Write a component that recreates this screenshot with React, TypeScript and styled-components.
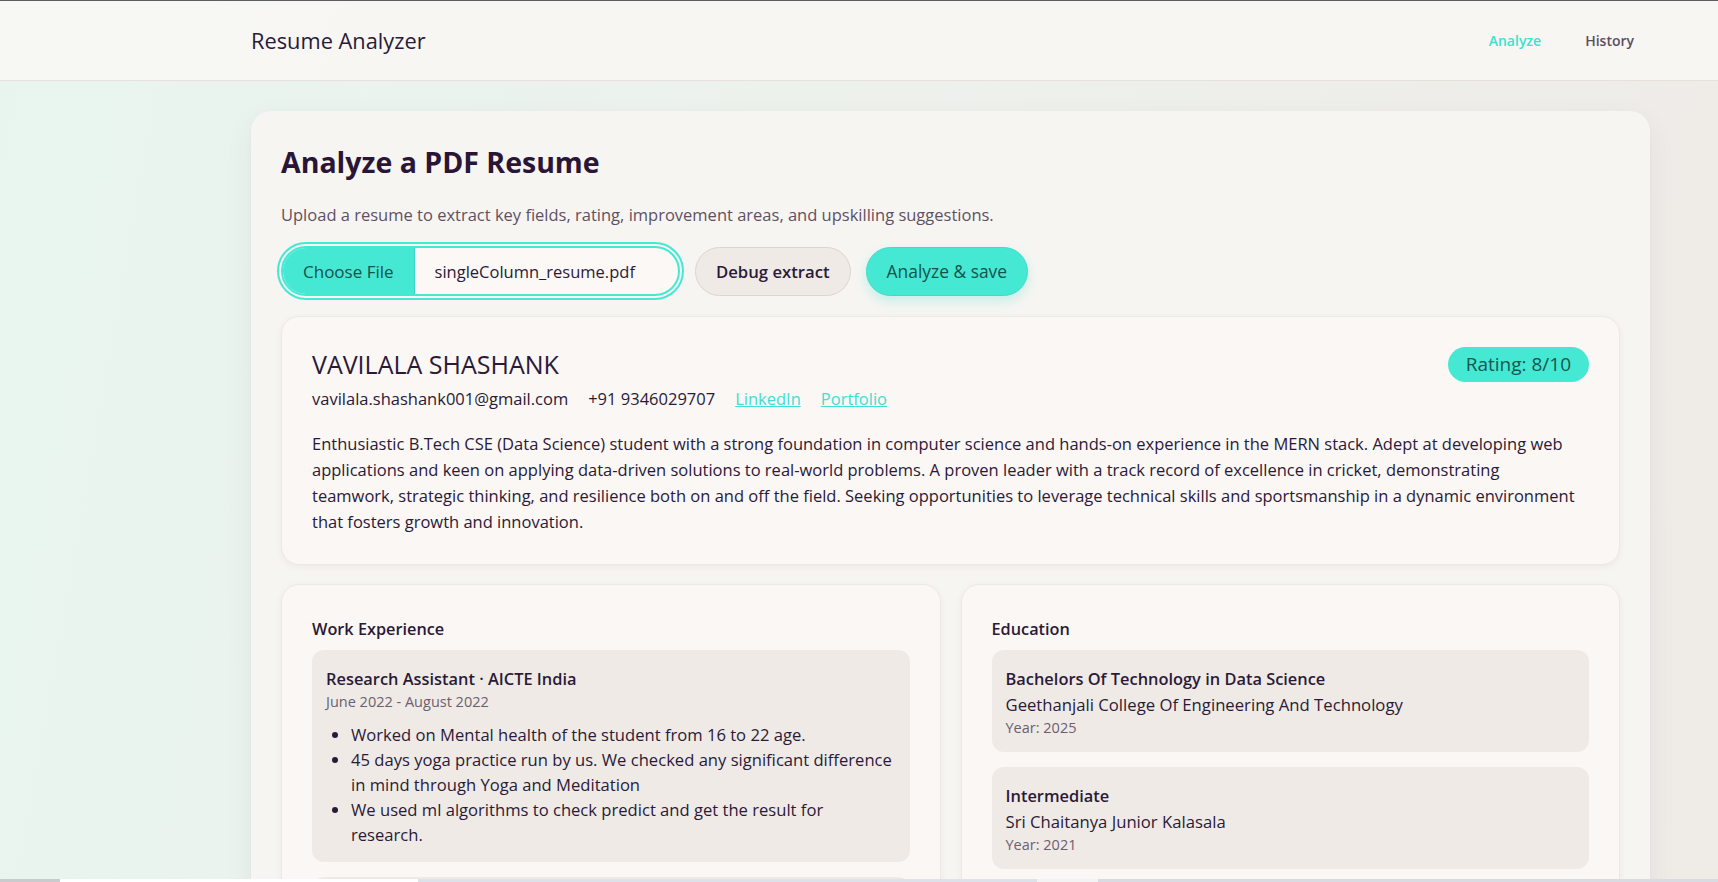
import React from 'react';
import styled, { createGlobalStyle } from 'styled-components';

// Page-wide reset and background
const GlobalStyle = createGlobalStyle`
  html, body {
    margin: 0;
    padding: 0;
  }
  body {
    min-height: 100vh;
    font-family: "Open Sans", "Noto Sans", "Liberation Sans", sans-serif;
    color: #2a1a38;
    background: linear-gradient(100deg, #e8f5ef 0%, #edf1ec 45%, #efebe7 100%);
    overflow: hidden;
  }
  * { box-sizing: border-box; }
`;

const TEAL = '#45e9d3';
const INK = '#2a1a38';

const TopBar = styled.header`
  height: 81px;
  border-top: 1px solid #5c5c5c;
  border-bottom: 1px solid #e8e0dd;
  background: rgba(247, 246, 243, 0.92);
  display: flex;
  align-items: center;
`;

const Shell = styled.div`
  width: 1399px;
  margin-left: 251px;
`;

const TopBarInner = styled(Shell)`
  display: flex;
  align-items: center;
  justify-content: space-between;
`;

const Brand = styled.div`
  font-size: 21.8px;
  font-weight: 500;
  color: ${INK};
`;

const Nav = styled.nav`
  display: flex;
  gap: 12px;
`;

const NavLink = styled.a<{ $active?: boolean }>`
  padding: 8px 16px;
  font-size: 14px;
  font-weight: 600;
  text-decoration: none;
  color: ${(p) => (p.$active ? '#40e0d0' : '#5b4d63')};
`;

const Main = styled.main`
  padding-top: 30px;
`;

const Panel = styled.section`
  background: #f7f5f2;
  border-radius: 20px;
  padding: 34px 30px 40px;
  box-shadow: 0 10px 30px rgba(60, 40, 50, 0.06), 0 1px 3px rgba(60, 40, 50, 0.04);
`;

const Title = styled.h1`
  margin: 0;
  font-size: 28.5px;
  line-height: 35px;
  font-weight: 700;
  color: #2a1536;
`;

const Lead = styled.p`
  margin: 23px 0 0;
  font-size: 16.5px;
  line-height: 24px;
  color: #5e5163;
`;

const Actions = styled.div`
  margin-top: 19px;
  display: flex;
  align-items: center;
  gap: 15px;
`;

const FilePicker = styled.label`
  display: flex;
  align-items: stretch;
  width: 399px;
  height: 50px;
  border: 2px solid ${TEAL};
  border-radius: 999px;
  overflow: hidden;
  background: #fbf8f5;
  outline: 2px solid ${TEAL};
  outline-offset: 2px;
`;

const ChooseButton = styled.span`
  display: flex;
  align-items: center;
  padding: 0 20px;
  background: ${TEAL};
  border-right: 1px solid #3fd6c1;
  font-size: 17px;
  font-weight: 500;
  color: #15524b;
`;

const FileName = styled.span`
  display: flex;
  align-items: center;
  padding-left: 20px;
  font-size: 16.5px;
  color: ${INK};
`;

const Pill = styled.button<{ $primary?: boolean }>`
  height: 49px;
  padding: 0 20px;
  border-radius: 999px;
  font-family: inherit;
  cursor: pointer;
  font-size: ${(p) => (p.$primary ? '17.4px' : '16.7px')};
  font-weight: ${(p) => (p.$primary ? 500 : 600)};
  color: ${(p) => (p.$primary ? '#15524b' : INK)};
  background: ${(p) => (p.$primary ? TEAL : '#efeae6')};
  border: 1px solid ${(p) => (p.$primary ? '#3fdcc6' : '#dcd5cf')};
  box-shadow: ${(p) => (p.$primary ? '0 5px 12px rgba(64, 224, 208, 0.28)' : 'none')};
`;

const Card = styled.div`
  background: #faf7f4;
  border: 1px solid #efe9e4;
  border-radius: 18px;
  padding: 30px 30px 29px;
  box-shadow: 0 2px 6px rgba(60, 40, 50, 0.06);
`;

const ResultCard = styled(Card)`
  margin-top: 20px;
  padding-top: 29px;
`;

const ResultHead = styled.div`
  display: flex;
  align-items: center;
  justify-content: space-between;
`;

const Name = styled.h2`
  margin: 0;
  font-size: 25px;
  line-height: 36px;
  font-weight: 500;
  color: ${INK};
`;

const Rating = styled.span`
  display: inline-flex;
  align-items: center;
  height: 35px;
  padding: 0 18px;
  border-radius: 999px;
  background: ${TEAL};
  color: #17574f;
  font-size: 19px;
`;

const Contacts = styled.div`
  margin-top: 5px;
  display: flex;
  gap: 20px;
  font-size: 16.5px;
  line-height: 24px;
`;

const ContactLink = styled.a`
  color: #40e0d0;
  text-decoration: underline;
`;

const Summary = styled.p`
  margin: 20px 0 0;
  max-width: 1267px;
  font-size: 16.5px;
  line-height: 25.9px;
  color: ${INK};
`;

const Columns = styled.div`
  margin-top: 19px;
  display: grid;
  grid-template-columns: 1fr 1fr;
  gap: 20px;
`;

const SectionTitle = styled.h3`
  margin: 0 0 7px;
  font-size: 16.3px;
  line-height: 28px;
  font-weight: 600;
  color: ${INK};
`;

const ItemList = styled.div`
  display: flex;
  flex-direction: column;
  gap: 15px;
`;

const Item = styled.div`
  background: #efeae6;
  border-radius: 12px;
  padding: 17px 14px 14px;
`;

const ItemTitle = styled.div`
  font-size: 16.4px;
  line-height: 24px;
  font-weight: 600;
  color: ${INK};
`;

const ItemSub = styled.div`
  margin-top: 2px;
  font-size: 16.7px;
  line-height: 24px;
  color: ${INK};
`;

const Meta = styled.div`
  font-size: 14.5px;
  line-height: 21px;
  color: #6b6070;
`;

const Bullets = styled.ul`
  margin: 10px 0 0;
  padding: 0 2px 0 25px;
  font-size: 16.6px;
  line-height: 25.2px;
  color: ${INK};
`;

const BottomEdge = styled.div`
  position: fixed;
  left: 0;
  right: 0;
  bottom: 0;
  height: 3px;
  background: linear-gradient(
    90deg,
    #c9cbcc 0 60px,
    #ffffff 60px 418px,
    #dde2ea 418px 1037px,
    #f3f3f3 1037px 1098px,
    #d8dce2 1098px 100%
  );
`;

const work = [
  {
    role: 'Research Assistant · AICTE India',
    dates: 'June 2022 - August 2022',
    points: [
      'Worked on Mental health of the student from 16 to 22 age.',
      '45 days yoga practice run by us. We checked any significant difference in mind through Yoga and Meditation',
      'We used ml algorithms to check predict and get the result for research.',
    ],
  },
  {
    role: 'Web Developer Intern',
    dates: '2023',
    points: ['Built full-stack features with the MERN stack.'],
  },
];

const education = [
  {
    degree: 'Bachelors Of Technology in Data Science',
    school: 'Geethanjali College Of Engineering And Technology',
    year: '2025',
  },
  {
    degree: 'Intermediate',
    school: 'Sri Chaitanya Junior Kalasala',
    year: '2021',
  },
];

const App: React.FC = () => {
  return (
    <>
      <GlobalStyle />
      <TopBar>
        <TopBarInner>
          <Brand>Resume Analyzer</Brand>
          <Nav>
            <NavLink $active href="#">Analyze</NavLink>
            <NavLink href="#">History</NavLink>
          </Nav>
        </TopBarInner>
      </TopBar>

      <Main>
        <Shell>
          <Panel>
            <Title>Analyze a PDF Resume</Title>
            <Lead>Upload a resume to extract key fields, rating, improvement areas, and upskilling suggestions.</Lead>

            <Actions>
              <FilePicker>
                <ChooseButton>Choose File</ChooseButton>
                <FileName>singleColumn_resume.pdf</FileName>
              </FilePicker>
              <Pill>Debug extract</Pill>
              <Pill $primary>Analyze &amp; save</Pill>
            </Actions>

            <ResultCard>
              <ResultHead>
                <Name>VAVILALA SHASHANK</Name>
                <Rating>Rating: 8/10</Rating>
              </ResultHead>
              <Contacts>
                <span>vavilala.shashank001@gmail.com</span>
                <span>+91 9346029707</span>
                <ContactLink href="#">LinkedIn</ContactLink>
                <ContactLink href="#">Portfolio</ContactLink>
              </Contacts>
              <Summary>
                Enthusiastic B.Tech CSE (Data Science) student with a strong foundation in computer science and
                hands-on experience in the MERN stack. Adept at developing web applications and keen on applying
                data-driven solutions to real-world problems. A proven leader with a track record of excellence in
                cricket, demonstrating teamwork, strategic thinking, and resilience both on and off the field. Seeking
                opportunities to leverage technical skills and sportsmanship in a dynamic environment that fosters
                growth and innovation.
              </Summary>
            </ResultCard>

            <Columns>
              <Card>
                <SectionTitle>Work Experience</SectionTitle>
                <ItemList>
                  {work.map((job) => (
                    <Item key={job.role}>
                      <ItemTitle>{job.role}</ItemTitle>
                      <Meta>{job.dates}</Meta>
                      <Bullets>
                        {job.points.map((pt) => (
                          <li key={pt}>{pt}</li>
                        ))}
                      </Bullets>
                    </Item>
                  ))}
                </ItemList>
              </Card>
              <Card>
                <SectionTitle>Education</SectionTitle>
                <ItemList>
                  {education.map((ed) => (
                    <Item key={ed.degree}>
                      <ItemTitle>{ed.degree}</ItemTitle>
                      <ItemSub>{ed.school}</ItemSub>
                      <Meta>Year: {ed.year}</Meta>
                    </Item>
                  ))}
                </ItemList>
              </Card>
            </Columns>
          </Panel>
        </Shell>
      </Main>
      <BottomEdge />
    </>
  );
};

export default App;
